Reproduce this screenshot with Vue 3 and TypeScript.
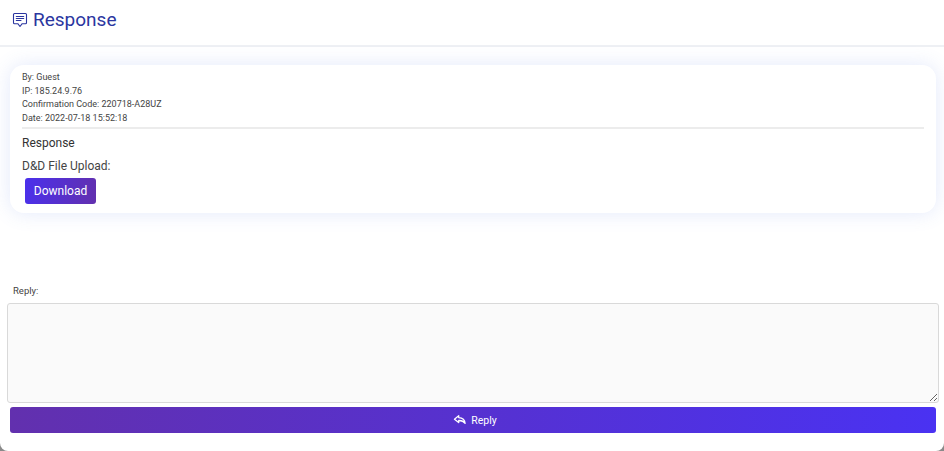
<script setup lang="ts">
const meta: string[] = [
  'By: Guest',
  'IP: 185.24.9.76',
  'Confirmation Code: 220718-A28UZ',
  'Date: 2022-07-18 15:52:18',
]
</script>

<template>
  <div class="modal">
    <header class="head">
      <svg class="head-icon" width="16" height="16" viewBox="0 0 16 16" fill="none" stroke="#2b36a0" stroke-width="1.1" stroke-linejoin="round" stroke-linecap="round">
        <path d="M2.500 1.500h11a1 1 0 0 1 1 1v8.200a1 1 0 0 1-1 1h-3.300L8 14.500l-2.200-2.800H2.500a1 1 0 0 1-1-1V2.500a1 1 0 0 1 1-1z" />
        <path d="M4.300 4.500h7.400M4.300 6.500h7.400M4.300 8.500h4.700" />
      </svg>
      <h1 class="title">Response</h1>
    </header>
    <main class="body">
      <section class="card">
        <div class="meta">
          <div v-for="line in meta" :key="line" class="meta-line">{{ line }}</div>
        </div>
        <hr class="rule" />
        <p class="answer">Response</p>
        <p class="field">D&amp;D File Upload:</p>
        <button class="download" type="button">Download</button>
      </section>
      <label class="reply-label" for="reply">Reply:</label>
      <textarea id="reply" class="reply-box"></textarea>
      <button class="reply-btn" type="button">
        <svg width="14" height="12" viewBox="0 0 16 14" fill="none" stroke="#fff" stroke-width="1.500" stroke-linejoin="round" stroke-linecap="round">
          <path d="M6.500 2 1.500 6l5 4V7.600c3-.2 5.500.6 7.500 3.400-.3-3.800-3-6.500-7.500-6.800z" />
        </svg>
        <span>Reply</span>
      </button>
    </main>
  </div>
</template>

<style>
html, body {
  margin: 0;
  background: #8a8a8a;
}
</style>

<style scoped>
.modal {
  width: 944px;
  height: 451px;
  box-sizing: border-box;
  background: #fff;
  border-radius: 0 0 8px 8px;
  font-family: Roboto, "Liberation Sans", sans-serif;
  overflow: hidden;
}
.head {
  height: 47px;
  box-sizing: border-box;
  border-bottom: 2px solid #eef0f4;
  display: flex;
  align-items: flex-start;
  padding: 9px 0 0 12px;
  gap: 5px;
}
.head-icon {
  margin-top: 3px;
}
.title {
  margin: 0;
  font-size: 19px;
  line-height: 22px;
  font-weight: 400;
  color: #2b36a0;
}
.body {
  display: flex;
  flex-direction: column;
  align-items: flex-start;
  padding: 0 5px 0 7px;
}
.card {
  width: 926px;
  margin: 18px 0 0 3px;
  height: 148px;
  box-sizing: border-box;
  background: #fff;
  border-radius: 14px;
  box-shadow: 0 0 20px rgba(80, 120, 230, 0.16);
  padding: 6px 12px 0;
}
.meta {
  font-size: 9px;
  line-height: 13.500px;
  color: #444;
}
.rule {
  border: 0;
  height: 2px;
  background: #ececec;
  margin: 2px 0 0;
}
.answer {
  margin: 6px 0 0;
  font-size: 12px;
  line-height: 16px;
  color: #333;
}
.field {
  margin: 7px 0 0;
  font-size: 12px;
  line-height: 16px;
  color: #444;
}
.download {
  display: block;
  margin: 4px 0 0 3px;
  width: 71px;
  height: 26px;
  border: 0;
  border-radius: 3px;
  padding: 0;
  background: linear-gradient(100deg, #4a30ec, #6230ae);
  color: #fff;
  font-family: inherit;
  font-size: 12px;
  font-weight: 450;
}
.reply-label {
  margin: 72px 0 0 6px;
  font-size: 9.500px;
  line-height: 12px;
  color: #444;
}
.reply-box {
  display: block;
  width: 932px;
  height: 100px;
  margin-top: 6px;
  box-sizing: border-box;
  background: #fafafa;
  border: 1px solid #d9d9d9;
  border-radius: 3px;
  outline: none;
}
.reply-btn {
  width: 926px;
  height: 26px;
  margin: 4px 0 0 3px;
  border: 0;
  padding: 0 0 0 4px;
  border-radius: 3px;
  background: linear-gradient(90deg, #6230ae, #4a32f2);
  color: #fff;
  font-family: inherit;
  font-size: 10.500px;
  font-weight: 450;
  display: flex;
  align-items: center;
  justify-content: center;
  gap: 4px;
}
</style>
